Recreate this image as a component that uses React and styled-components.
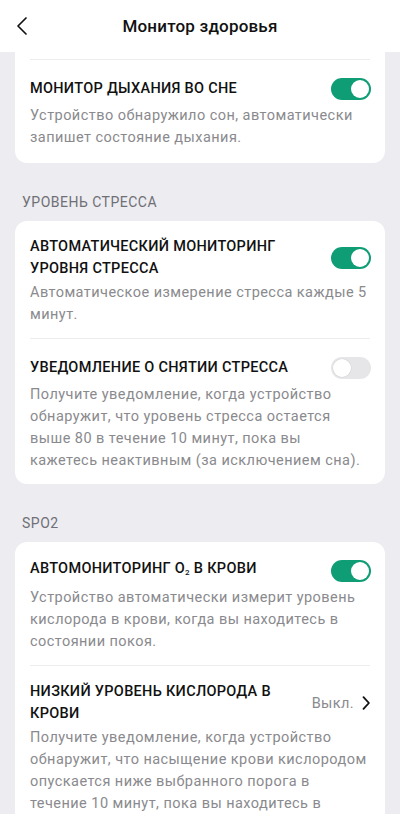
import React from 'react';
import styled, { createGlobalStyle } from 'styled-components';

const GlobalStyle = createGlobalStyle`
  html, body {
    margin: 0;
    padding: 0;
    background: #ececf1;
    font-family: Roboto, "Noto Sans", sans-serif;
    -webkit-font-smoothing: antialiased;
  }
`;

const Page = styled.div`
  width: 400px;
  height: 814px;
  overflow: hidden;
  background: #ececf1;
`;

const Header = styled.header`
  height: 52px;
  background: #fff;
  display: flex;
  align-items: center;
  justify-content: center;
  position: relative;
`;

const BackButton = styled.button`
  position: absolute;
  left: 10px;
  top: 14px;
  width: 24px;
  height: 24px;
  padding: 0;
  border: none;
  background: transparent;
  display: flex;
  align-items: center;
  justify-content: center;
`;

const Title = styled.h1`
  margin: 0;
  font-size: 17px;
  font-weight: 500;
  color: #111;
  letter-spacing: 0.2px;
`;

const Content = styled.div`
  padding: 0 15px;
  display: flex;
  flex-direction: column;
`;

const Card = styled.section`
  background: #fff;
  border-radius: ${(p) => (p.$cut ? '0 0 12px 12px' : '12px')};
  padding: ${(p) => (p.$cut ? '7px 15px 2px' : '0 15px')};
`;

const SectionLabel = styled.div`
  font-size: 14px;
  color: #6f6f75;
  letter-spacing: 0.5px;
  padding: 31px 7px 10px;
  line-height: 17px;
`;

const Row = styled.div`
  padding: 15px 0 12px;
  border-top: ${(p) => (p.$divider ? '1px solid #ededf0' : 'none')};
`;

const RowHead = styled.div`
  display: flex;
  align-items: center;
  justify-content: space-between;
  gap: 12px;
  min-height: 28px;
`;

const RowTitle = styled.div`
  font-size: 14.5px;
  font-weight: 500;
  line-height: 22px;
  color: #111;
  letter-spacing: 0.3px;
  flex: 1;
`;

const Sub = styled.span`
  font-size: 8px;
  vertical-align: -2px;
`;

const Desc = styled.p`
  margin: 2px 0 0;
  font-size: 14.5px;
  line-height: 22px;
  color: #8a8a8e;
  letter-spacing: 0.45px;
`;

const Toggle = styled.div`
  width: 40px;
  height: 22px;
  border-radius: 11px;
  background: ${(p) => (p.$on ? '#0f9d76' : '#e6e6e8')};
  position: relative;
  flex-shrink: 0;
  margin-right: -1px;
  &::after {
    content: '';
    position: absolute;
    top: 2px;
    left: ${(p) => (p.$on ? '20px' : '2px')};
    width: 18px;
    height: 18px;
    border-radius: 50%;
    background: #fff;
    box-shadow: ${(p) => (p.$on ? 'none' : '0 0 0 0.5px #d4d4d6')};
  }
`;

const Value = styled.div`
  display: flex;
  align-items: center;
  gap: 2px;
  margin-right: -6px;
  font-size: 14.5px;
  color: #8a8a8e;
  letter-spacing: 0.4px;
  flex-shrink: 0;
`;

const Chevron = ({ left, size = 24, stroke = 1.8 }) => (
  <svg width={size} height={size} viewBox="0 0 24 24" fill="none">
    <path
      d={left ? 'M16 4 L8 12 L16 20' : 'M9 5 L15.5 12 L9 19'}
      stroke="#111"
      strokeWidth={stroke}
      strokeLinecap="round"
      strokeLinejoin="round"
    />
  </svg>
);

const Item = ({ title, desc, on, value, divider }) => (
  <Row $divider={divider}>
    <RowHead>
      <RowTitle>{title}</RowTitle>
      {value ? (
        <Value>
          {value}
          <Chevron size={20} stroke={2.2} />
        </Value>
      ) : (
        <Toggle $on={on} />
      )}
    </RowHead>
    <Desc>{desc}</Desc>
  </Row>
);

export default function App() {
  return (
    <Page>
      <GlobalStyle />
      <Header>
        <BackButton>
          <Chevron left size={24} stroke={1.7} />
        </BackButton>
        <Title>Монитор здоровья</Title>
      </Header>
      <Content>
        <Card $cut>
          <Item
            divider
            on
            title="МОНИТОР ДЫХАНИЯ ВО СНЕ"
            desc="Устройство обнаружило сон, автоматически запишет состояние дыхания."
          />
        </Card>

        <SectionLabel>УРОВЕНЬ СТРЕССА</SectionLabel>
        <Card>
          <Item
            on
            title="АВТОМАТИЧЕСКИЙ МОНИТОРИНГ УРОВНЯ СТРЕССА"
            desc="Автоматическое измерение стресса каждые 5 минут."
          />
          <Item
            divider
            title="УВЕДОМЛЕНИЕ О СНЯТИИ СТРЕССА"
            desc="Получите уведомление, когда устройство обнаружит, что уровень стресса остается выше 80 в течение 10 минут, пока вы кажетесь неактивным (за исключением сна)."
          />
        </Card>

        <SectionLabel>SPO2</SectionLabel>
        <Card>
          <Item
            on
            title={<>АВТОМОНИТОРИНГ O<Sub>2</Sub> В КРОВИ</>}
            desc="Устройство автоматически измерит уровень кислорода в крови, когда вы находитесь в состоянии покоя."
          />
          <Item
            divider
            value="Выкл."
            title="НИЗКИЙ УРОВЕНЬ КИСЛОРОДА В КРОВИ"
            desc="Получите уведомление, когда устройство обнаружит, что насыщение крови кислородом опускается ниже выбранного порога в течение 10 минут, пока вы находитесь в состоянии покоя."
          />
        </Card>
      </Content>
    </Page>
  );
}
